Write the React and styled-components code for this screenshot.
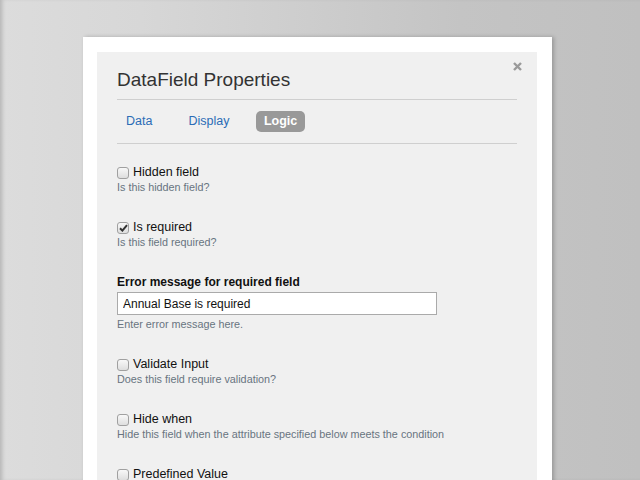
import React from "react";
import styled, { createGlobalStyle } from "styled-components";

const Global = createGlobalStyle`
  html, body { margin: 0; padding: 0; }
  body {
    width: 640px;
    height: 480px;
    overflow: hidden;
    font-family: "Liberation Sans", Arial, sans-serif;
    background: linear-gradient(to right, #dcdcdc 0%, #d7d7d7 22%, #c4c4c4 72%, #c0c0c0 100%);
  }
`;

const Page = styled.div`
  width: 640px;
  height: 480px;
  box-sizing: border-box;
  padding: 37px 0 0 83px;
  box-shadow: inset 4px 0 4px -2px rgba(0, 0, 0, 0.18);
  overflow: hidden;
`;

const Modal = styled.div`
  width: 469px;
  height: 460px;
  box-sizing: border-box;
  background: #ffffff;
  padding: 15px 15px 0 14px;
  box-shadow: 2px 0 4px rgba(0, 0, 0, 0.22);
`;

const Panel = styled.div`
  position: relative;
  height: 100%;
  box-sizing: border-box;
  background: #f0f0f0;
  padding: 17px 20px 0 20px;
`;

const Close = styled.button`
  position: absolute;
  top: 10px;
  right: 15px;
  width: 9px;
  height: 9px;
  padding: 0;
  border: 0;
  background: none;
  display: flex;
  cursor: pointer;
`;

const Title = styled.h1`
  margin: 0;
  font-size: 19px;
  line-height: 22px;
  font-weight: normal;
  color: #333333;
`;

const Rule = styled.hr`
  margin: ${(p) => p.$top}px 0 0 0;
  border: 0;
  height: 1px;
  background: #cfcfcf;
`;

const Tabs = styled.div`
  display: flex;
  gap: 20px;
  margin: 11px 0 0 1px;
`;

const Tab = styled.div`
  height: 21px;
  line-height: 21px;
  padding: 0 ${(p) => (p.$active ? 7.5 : 8)}px;
  margin-left: ${(p) => (p.$active ? -1 : 0)}px;
  border-radius: 5px;
  font-size: 12.5px;
  font-weight: ${(p) => (p.$active ? "bold" : "normal")};
  color: ${(p) => (p.$active ? "#ffffff" : "#2b6cb6")};
  background: ${(p) => (p.$active ? "#999999" : "transparent")};
`;

const Form = styled.div`
  display: flex;
  flex-direction: column;
  gap: 25px;
  margin-top: 20px;
`;

const Group = styled.div`
  display: flex;
  flex-direction: column;
`;

const CheckRow = styled.label`
  display: flex;
  align-items: center;
  gap: 4px;
  height: 16px;
  font-size: 12.5px;
  line-height: 16px;
  color: #111111;
`;

const Box = styled.span`
  width: 12px;
  height: 12px;
  box-sizing: border-box;
  border: 1px solid #a0a0a0;
  border-radius: 3px;
  background: linear-gradient(#f8f8f8, #dedede);
  display: flex;
  align-items: center;
  justify-content: center;
  margin-top: 1px;
`;

const Help = styled.div`
  font-size: 10.8px;
  line-height: 14px;
  color: #687480;
`;

const BoldLabel = styled.div`
  font-size: 12px;
  font-weight: bold;
  line-height: 16px;
  color: #111111;
`;

const Input = styled.input`
  width: 320px;
  height: 23px;
  box-sizing: border-box;
  margin: 2px 0 2px 0;
  padding: 0 5px;
  border: 1px solid #aaaaaa;
  background: #ffffff;
  font-family: "Liberation Sans", Arial, sans-serif;
  font-size: 12px;
  color: #111111;
  outline: none;
`;

const Check = ({ checked }) => (
  <Box>
    {checked && (
      <svg width="9" height="8" viewBox="0 0 9 8">
        <path d="M1 4.2 L3.4 6.6 L8 1.2" fill="none" stroke="#333" strokeWidth="2" />
      </svg>
    )}
  </Box>
);

const CheckField = ({ label, help, checked }) => (
  <Group>
    <CheckRow>
      <Check checked={checked} />
      {label}
    </CheckRow>
    <Help>{help}</Help>
  </Group>
);

export default function App() {
  return (
    <>
      <Global />
      <Page>
        <Modal>
          <Panel>
            <Close aria-label="close">
              <svg width="9" height="9" viewBox="0 0 9 9">
                <path d="M1 1 L8 8 M8 1 L1 8" stroke="#9a9a9a" strokeWidth="2.4" />
              </svg>
            </Close>
            <Title>DataField Properties</Title>
            <Rule $top={8} />
            <Tabs>
              <Tab>Data</Tab>
              <Tab>Display</Tab>
              <Tab $active>Logic</Tab>
            </Tabs>
            <Rule $top={11} />
            <Form>
              <CheckField label="Hidden field" help="Is this hidden field?" />
              <CheckField label="Is required" help="Is this field required?" checked />
              <Group>
                <BoldLabel>Error message for required field</BoldLabel>
                <Input defaultValue="Annual Base is required" />
                <Help>Enter error message here.</Help>
              </Group>
              <CheckField label="Validate Input" help="Does this field require validation?" />
              <CheckField
                label="Hide when"
                help="Hide this field when the attribute specified below meets the condition"
              />
              <CheckField label="Predefined Value" help="" />
            </Form>
          </Panel>
        </Modal>
      </Page>
    </>
  );
}
